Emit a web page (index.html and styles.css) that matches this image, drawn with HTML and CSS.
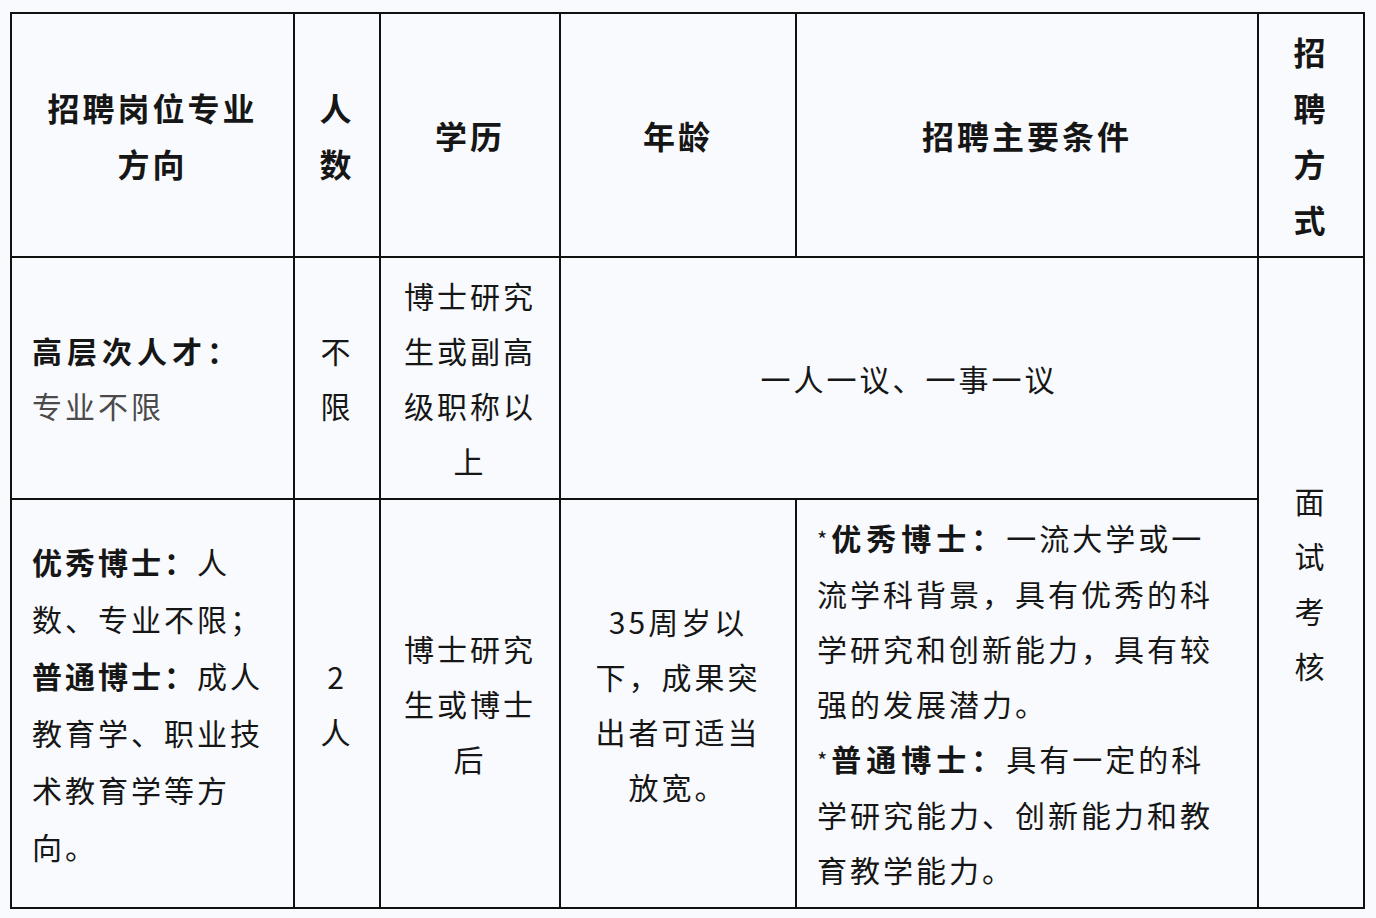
FILE: index.html
```html
<!DOCTYPE html>
<html lang="zh-CN">
<head>
<meta charset="utf-8">
<title>招聘</title>
<link rel="stylesheet" href="styles.css">
</head>
<body>
<table class="jobs">
  <colgroup>
    <col class="c1"><col class="c2"><col class="c3"><col class="c4"><col class="c5"><col class="c6">
  </colgroup>
  <tr class="r-head">
    <th>招聘岗位专业<br>方向</th>
    <th>人<br>数</th>
    <th>学历</th>
    <th>年龄</th>
    <th>招聘主要条件</th>
    <th>招<br>聘<br>方<br>式</th>
  </tr>
  <tr class="r-high">
    <td class="left"><span class="semi">高层次人才：</span><br><span class="muted">专业不限</span></td>
    <td>不<br>限</td>
    <td>博士研究<br>生或副高<br>级职称以<br>上</td>
    <td colspan="2">一人一议、一事一议</td>
    <td rowspan="2">面<br>试<br>考<br>核</td>
  </tr>
  <tr class="r-doc">
    <td class="left loose"><b>优秀博士：</b>人<br>数、专业不限；<br><b>普通博士：</b>成人<br>教育学、职业技<br>术教育学等方<br>向。</td>
    <td>2<br>人</td>
    <td>博士研究<br>生或博士<br>后</td>
    <td>35周岁以<br>下，成果突<br>出者可适当<br>放宽。</td>
    <td class="left cond"><span class="star">*</span><b>优秀博士：</b>一流大学或一<br>流学科背景，具有优秀的科<br>学研究和创新能力，具有较<br>强的发展潜力。<br><span class="star">*</span><b>普通博士：</b>具有一定的科<br>学研究能力、创新能力和教<br>育教学能力。</td>
  </tr>
</table>
</body>
</html>
```
FILE: styles.css
```css
html, body {
  margin: 0;
  padding: 0;
  background: #f9fafd;
}
body {
  padding: 12px 0 0 10px;
  font-family: "Noto Sans CJK SC", "Noto Sans", sans-serif;
  color: #161616;
}
.jobs {
  border-collapse: collapse;
  table-layout: fixed;
  width: 1353px;
  font-size: 30px;
  letter-spacing: 3px;
}
.c1 { width: 283px; }
.c2 { width: 86px; }
.c3 { width: 180px; }
.c4 { width: 236px; }
.c5 { width: 462px; }
.c6 { width: 106px; }
.jobs th, .jobs td {
  border: 2px solid #111;
  text-align: center;
  vertical-align: middle;
  padding: 0;
  line-height: 55px;
}
.jobs th {
  font-weight: 700;
  font-size: 32px;
  line-height: 56px;
}
.r-head { height: 244px; }
.r-high { height: 242px; }
.r-doc { height: 409px; }
.jobs td.left {
  text-align: left;
  padding-left: 20px;
}
.jobs td.loose { line-height: 57px; }
.jobs td.cond { padding-left: 20px; line-height: 55px; }
.semi { font-weight: 600; letter-spacing: 5px; }
.muted { color: #4a4a4a; }
.jobs b { font-weight: 700; }
.cond b { letter-spacing: 5px; }
.star {
  font-size: 22px;
  letter-spacing: 4px;
  vertical-align: 2px;
}
```
